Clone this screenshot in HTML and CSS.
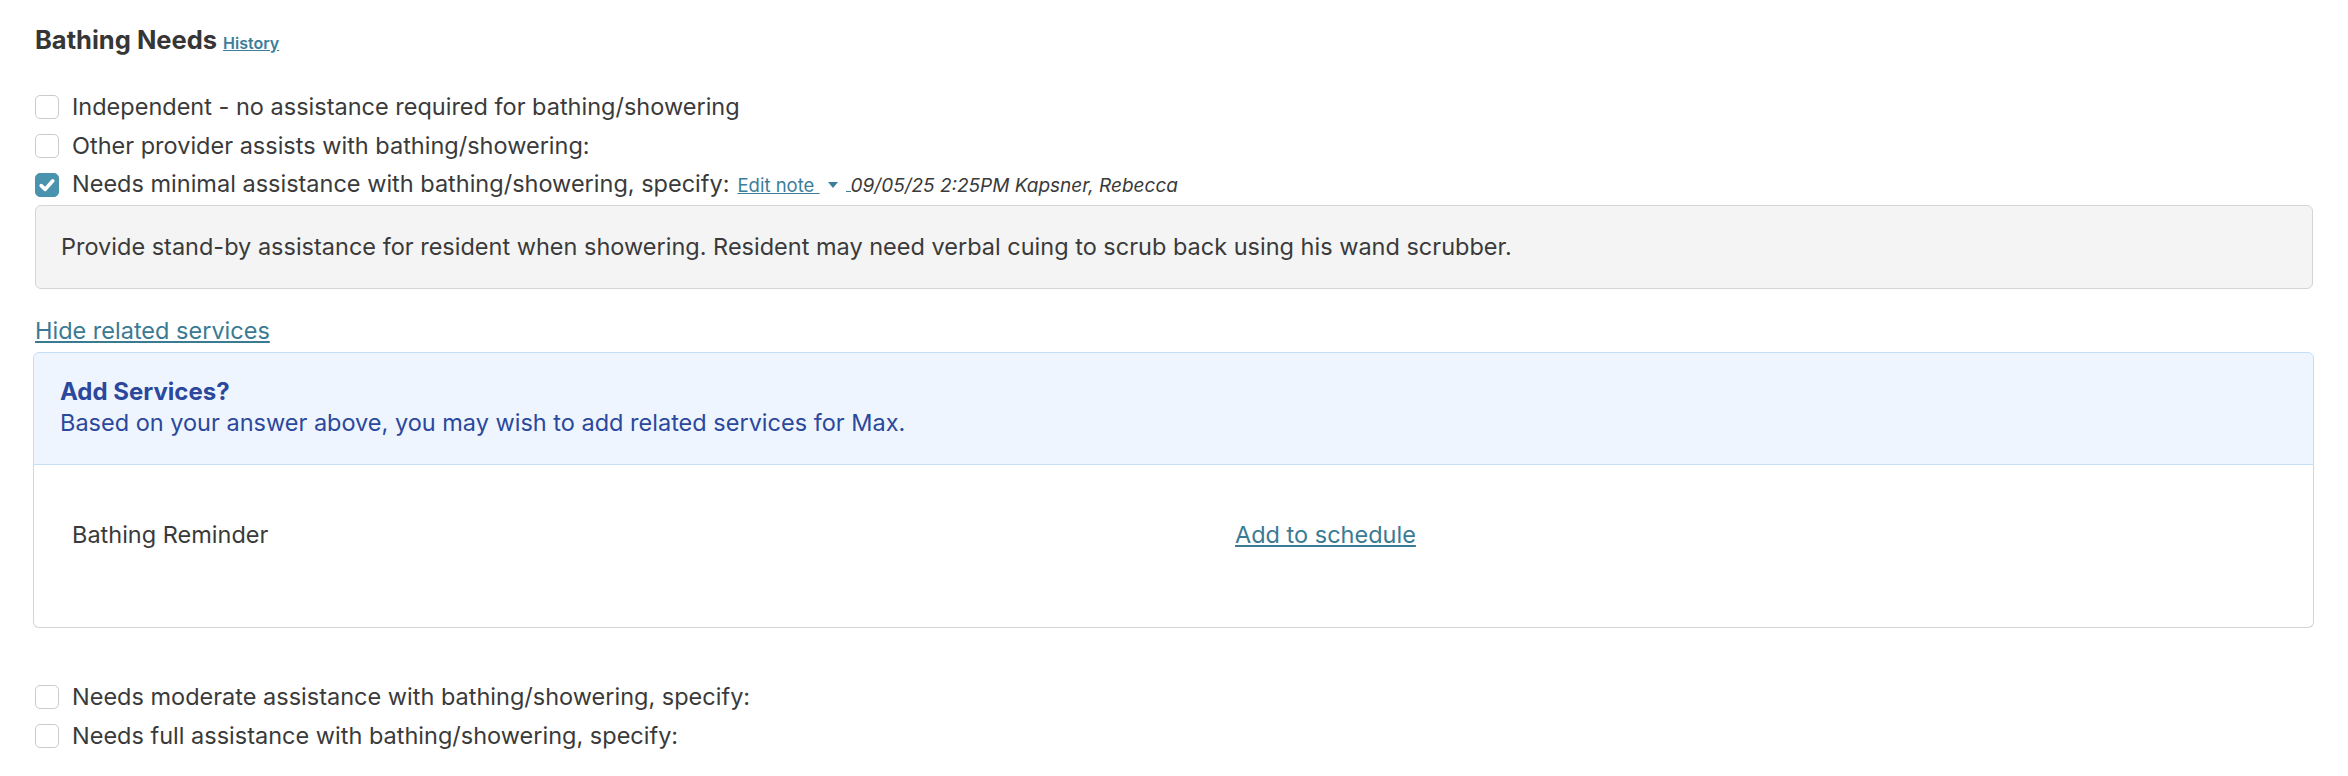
FILE: index.html
```html
<!DOCTYPE html>
<html lang="en">
<head>
<meta charset="utf-8">
<title>Bathing Needs</title>
<link rel="stylesheet" href="styles.css">
</head>
<body>
<div class="page">
  <h2 class="title">Bathing Needs<a class="history" href="#">History</a></h2>

  <ul class="options">
    <li class="option"><span class="cb"></span><span class="label">Independent - no assistance required for bathing/showering</span></li>
    <li class="option"><span class="cb"></span><span class="label">Other provider assists with bathing/showering:</span></li>
    <li class="option"><span class="cb checked"><svg viewBox="0 0 24 24" width="24" height="24"><path d="M6.2 12.6 L10.2 16.4 L17.8 7.8" fill="none" stroke="#fff" stroke-width="3.6" stroke-linecap="round" stroke-linejoin="round"/></svg></span><span class="label">Needs minimal assistance with bathing/showering, specify:<a class="edit-note" href="#">Edit note&nbsp;</a><span class="caret"></span><span class="gap-line"></span><i class="meta">09/05/25 2:25PM Kapsner, Rebecca</i></span></li>
  </ul>

  <div class="note">Provide stand-by assistance for resident when showering. Resident may need verbal cuing to scrub back using his wand scrubber.</div>

  <div class="toggle-wrap"><a class="toggle" href="#">Hide related services</a></div>

  <div class="services">
    <div class="services-head">
      <div class="services-title">Add Services?</div>
      <div class="services-sub">Based on your answer above, you may wish to add related services for Max.</div>
    </div>
    <div class="service-row">
      <span class="service-name">Bathing Reminder</span>
      <a class="service-add" href="#">Add to schedule</a>
    </div>
  </div>

  <ul class="options bottom">
    <li class="option"><span class="cb"></span><span class="label">Needs moderate assistance with bathing/showering, specify:</span></li>
    <li class="option"><span class="cb"></span><span class="label">Needs full assistance with bathing/showering, specify:</span></li>
  </ul>
</div>
</body>
</html>
```

FILE: styles.css
```css
* { box-sizing: border-box; }

html, body {
  margin: 0;
  padding: 0;
  background: #ffffff;
}

body {
  font-family: Inter, "Noto Sans", "Liberation Sans", sans-serif;
  font-size: 23.5px;
  color: #3a3a3a;
}

.page {
  padding: 22px 35px 0 35px;
}

.title {
  margin: 0;
  font-size: 25.5px;
  font-weight: 700;
  line-height: 36px;
  color: #363636;
}

.history {
  margin-left: 6px;
  font-size: 16px;
  font-weight: 600;
  color: #3b7e9a;
  text-decoration: underline;
}

.options {
  list-style: none;
  margin: 26px 0 0 0;
  padding: 0;
}

.options.bottom {
  margin-top: 49px;
}

.option {
  display: flex;
  align-items: center;
  gap: 13px;
  height: 39px;
  line-height: 39px;
}

.cb {
  flex: 0 0 24px;
  width: 24px;
  height: 24px;
  border: 1px solid #cbcbcb;
  border-radius: 5px;
  background: #fff;
  display: flex;
  align-items: center;
  justify-content: center;
}

.cb.checked {
  background: #4a93ae;
  border-color: #4a93ae;
}

.cb.checked svg {
  display: block;
  flex: 0 0 24px;
}

.label {
  white-space: nowrap;
}

.edit-note {
  margin-left: 8px;
  font-size: 18.5px;
  color: #3b7e9a;
  text-decoration: underline;
}

.caret {
  display: inline-block;
  margin-left: 8px;
  width: 0;
  height: 0;
  border-left: 5px solid transparent;
  border-right: 5px solid transparent;
  border-top: 6px solid #3b7e9a;
  vertical-align: 4px;
}

.gap-line {
  display: inline-block;
  margin-left: 8px;
  width: 5px;
  height: 1px;
  background: #3b7e9a;
  vertical-align: 0;
}

.meta {
  font-size: 19px;
  font-style: italic;
  color: #3a3a3a;
}

.note {
  margin-top: 1px;
  padding: 21px 25px 22px 25px;
  line-height: 39px;
  background: #f4f4f4;
  border: 1px solid #d4d4d4;
  border-radius: 6px;
}

.toggle-wrap {
  margin-top: 22px;
  line-height: 39px;
}

.toggle {
  color: #3b7a93;
  text-decoration: underline;
}

.services {
  margin: 2px -1px 0 -2px;
}

.services-head {
  padding: 23px 26px 26px 26px;
  background: #eef5fe;
  border: 1px solid #c6ddf6;
  border-radius: 6px 6px 0 0;
  color: #2b489c;
  line-height: 31px;
}

.services-title {
  font-weight: 700;
  font-size: 24px;
}

.service-row {
  display: grid;
  grid-template-columns: 1163px 1fr;
  padding: 50px 38px 73px 38px;
  line-height: 39px;
  border: 1px solid #d4d4d4;
  border-top: none;
  border-radius: 0 0 6px 6px;
  background: #fff;
}

.service-add {
  color: #3b7a93;
  text-decoration: underline;
  justify-self: start;
}
```
